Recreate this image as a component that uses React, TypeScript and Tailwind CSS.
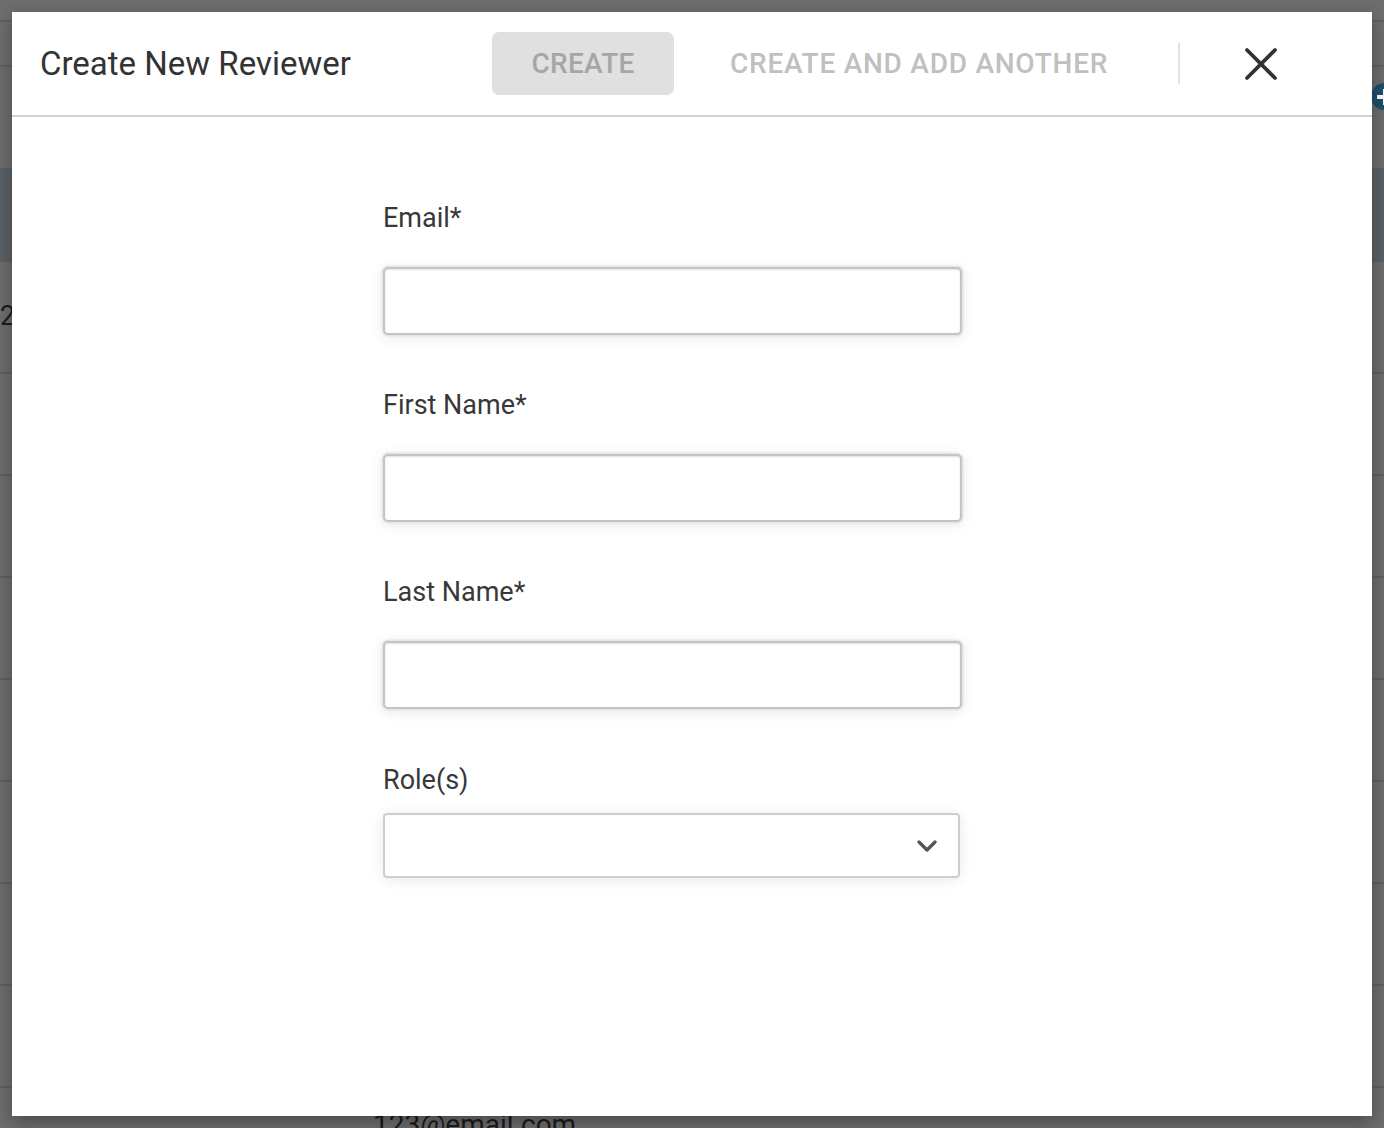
import React from "react";

// one text field of the reviewer form
function Field({ label, first }: { label: string; first?: boolean }) {
  return (
    <div className={first ? "" : "mt-[54px]"}>
      <label className="block text-[27px] leading-[32px] text-[#383838]">{label}</label>
      <input
        type="text"
        className="mt-[33px] block w-[579px] h-[68px] rounded-[5px] border-2 border-[#c4c4c4] bg-white outline-none shadow-[0_0_0_1.5px_#e6e6e6,0_2px_14px_rgba(0,0,0,0.11),inset_0_1px_2px_rgba(0,0,0,0.12)]"
      />
    </div>
  );
}

function Background() {
  const rows = [0, 1, 2, 3, 4, 5, 6];
  return (
    <div className="flex flex-col">
      <div className="h-[20px]" />
      <div className="h-[45px] border-t-2 border-[#626262]" />
      <div className="relative h-[103px] border-t-2 border-[#626262]">
        <div className="absolute right-[-14px] top-[16px] w-[27px] h-[27px] rounded-full bg-[#1f4f70] flex items-center justify-center">
          <span className="block w-[16px] h-[4px] bg-white" />
          <span className="absolute block w-[4px] h-[16px] bg-white" />
        </div>
      </div>
      <div className="h-[94px] bg-[#5b6267]" />
      <div className="h-[110px] pt-[38px] text-[27px] leading-[32px] text-[#1c1c1c] whitespace-nowrap">
        <span>2</span>
      </div>
      {rows.map((r) => (
        <div key={r} className="h-[102px] border-t-2 border-[#626262]" />
      ))}
      <div className="h-[60px] border-t-2 border-[#626262] pt-[20px] pl-[373px] text-[28px] leading-[33px] text-[#1c1c1c]">
        123@email.com
      </div>
    </div>
  );
}

export default function App() {
  return (
    <div className="relative w-full h-[1128px] overflow-hidden bg-[#6e6e6e] font-['Roboto','Liberation_Sans',sans-serif]">
      <Background />

      {/* modal */}
      <div className="absolute inset-0 p-3">
        <div className="h-full bg-white flex flex-col shadow-[0_6px_18px_rgba(0,0,0,0.35)]">
          <header className="h-[105px] shrink-0 flex items-center border-b-2 border-[#d2d2d2] pl-[28px]">
            <h1 className="w-[452px] text-[33px] text-[#333333] whitespace-nowrap">Create New Reviewer</h1>
            <button className="w-[182px] h-[63px] rounded-[7px] bg-[#e0e0e0] text-[28px] font-medium tracking-[0.3px] text-[#a6a6a6]">
              CREATE
            </button>
            <button className="ml-[56px] text-[28px] font-medium tracking-[0.75px] text-[#c0c0c0] whitespace-nowrap">
              CREATE AND ADD ANOTHER
            </button>
            <div className="ml-[70px] w-[2px] h-[41px] bg-[#e2e2e2]" />
            <button className="ml-[64px] w-[34px] h-[34px] flex items-center justify-center">
              <svg width="34" height="34" viewBox="0 0 34 34">
                <path d="M3 3 L31 31 M31 3 L3 31" stroke="#333333" strokeWidth="3.8" strokeLinecap="round" />
              </svg>
            </button>
          </header>

          <div className="pt-[85px] pl-[371px]">
            <Field label="Email*" first />
            <Field label="First Name*" />
            <Field label="Last Name*" />

            <div className="mt-[55px]">
              <label className="block text-[27px] leading-[32px] text-[#383838]">Role(s)</label>
              <div className="mt-[17px] w-[577px] h-[65px] rounded-[4px] border-2 border-[#cecece] bg-white flex items-center justify-end pr-[21px] shadow-[0_2px_14px_rgba(0,0,0,0.09)]">
                <svg width="20" height="12" viewBox="0 0 20 12">
                  <path d="M2 2 L10 10 L18 2" fill="none" stroke="#555555" strokeWidth="3.3" strokeLinecap="round" strokeLinejoin="round" />
                </svg>
              </div>
            </div>
          </div>
        </div>
      </div>
    </div>
  );
}
